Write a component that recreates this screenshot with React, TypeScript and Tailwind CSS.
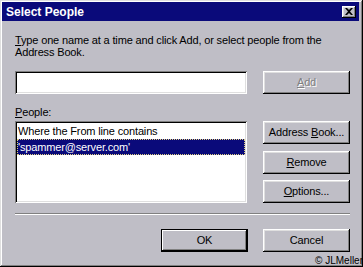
const font = { fontFamily: '"Liberation Sans", Arial, sans-serif' };

const raised =
  "bg-[#bfbec6] shadow-[inset_-1px_-1px_#000,inset_1px_1px_#fff,inset_-2px_-2px_#808080,inset_2px_2px_#dfdfdf]";
const sunken =
  "bg-white shadow-[inset_1px_1px_#808080,inset_-1px_-1px_#fff,inset_2px_2px_#000,inset_-2px_-2px_#dfdfdf]";

function Btn({
  children,
  disabled = false,
  isDefault = false,
}: {
  children: React.ReactNode;
  disabled?: boolean;
  isDefault?: boolean;
}) {
  return (
    <div
      className={`flex h-[23px] w-[87px] items-center justify-center bg-[#bfbec6] text-[11px] tracking-[-0.15px] ${
        disabled ? "text-[#808080] [text-shadow:1px_1px_#fff]" : "text-black"
      } ${
        isDefault
          ? "border border-black shadow-[inset_-1px_-1px_#000,inset_1px_1px_#fff,inset_-2px_-2px_#808080]"
          : "shadow-[inset_-1px_-1px_#000,inset_1px_1px_#fff,inset_-2px_-2px_#808080,inset_2px_2px_#dfdfdf]"
      }`}
    >
      <span>{children}</span>
    </div>
  );
}

export default function App() {
  return (
    <div
      className="relative flex h-[267px] w-[363px] flex-col overflow-hidden bg-[#bfbec6] p-[2px] pr-[4px] shadow-[inset_-1px_-1px_#000,inset_1px_1px_#dfdfdf,inset_-2px_-2px_#808080,inset_2px_2px_#fff]"
      style={font}
    >
      {/* title bar */}
      <div className="flex h-[19px] items-center justify-between bg-[#0a0a7a] pl-[4px] pr-[3px]">
        <span className="text-[12px] font-bold leading-none text-white">Select People</span>
        <div className={`flex h-[12px] w-[14px] items-center justify-center ${raised}`}>
          <svg width="8" height="7" viewBox="0 0 8 7">
            <path d="M0 0h2l2 2 2-2h2L5 3.5 8 7H6L4 5 2 7H0l3-3.5z" fill="#000" />
          </svg>
        </div>
      </div>

      <div className="box-content flex w-[335px] flex-col pl-[13px] text-[11px] tracking-[-0.15px] text-black">
        <p className="mt-[13px] leading-[12px]">
          <span className="underline">T</span>ype one name at a time and click Add, or select people from the
          <br />
          Address Book.
        </p>

        <div className="mt-[13px] flex gap-[16px]">
          <div className={`h-[23px] w-[232px] ${sunken}`} />
          <Btn disabled>
            <span className="underline">A</span>dd
          </Btn>
        </div>

        <div className="mt-[12px] leading-[12px]">
          <span className="underline">P</span>eople:
        </div>

        <div className="mt-[3px] flex gap-[16px]">
          <div className={`h-[82px] w-[232px] p-[2px] ${sunken}`}>
            <div className="h-[16px] pl-[1px] pt-[1px] leading-[15px]">Where the From line contains</div>
            <div className="h-[16px] bg-[#0a0a7a] pl-[1px] pt-[1px] leading-[15px] text-white outline-1 outline-dotted outline-offset-[-1px] outline-[#e0d080]">
              'spammer@server.com'
            </div>
          </div>
          <div className="flex h-[82px] flex-col justify-between">
            <Btn>
              Address <span className="underline">B</span>ook...
            </Btn>
            <Btn>
              <span className="underline">R</span>emove
            </Btn>
            <Btn>
              <span className="underline">O</span>ptions...
            </Btn>
          </div>
        </div>

        <div className="mt-[10px] h-[2px] border-t border-b border-t-[#808080] border-b-white" />

        <div className="mt-[14px] flex justify-end gap-[15px]">
          <Btn isDefault>OK</Btn>
          <Btn>Cancel</Btn>
        </div>
      </div>

      <span className="absolute bottom-[1px] right-0 text-[10px] leading-[11px] text-black">© JLMeller</span>
    </div>
  );
}
